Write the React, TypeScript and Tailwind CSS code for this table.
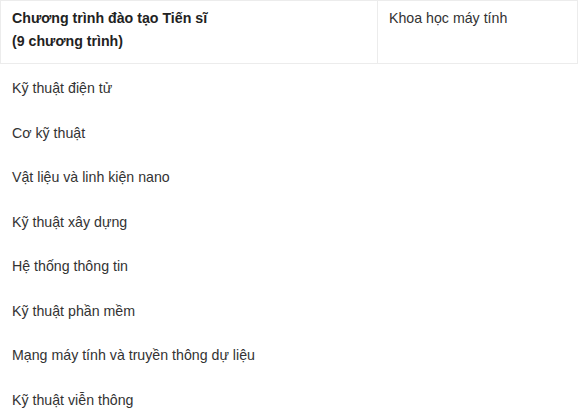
const rows = [
  'Kỹ thuật điện tử',
  'Cơ kỹ thuật',
  'Vật liệu và linh kiện nano',
  'Kỹ thuật xây dựng',
  'Hệ thống thông tin',
  'Kỹ thuật phần mềm',
  'Mạng máy tính và truyền thông dự liệu',
  'Kỹ thuật viễn thông',
]

export default function App() {
  return (
    <div
      className="w-[580px] h-[419px] overflow-hidden bg-white text-[14.2px] text-[#333]"
      style={{ fontFamily: '"Liberation Sans", Arial, sans-serif' }}
    >
      <div className="w-[578px] flex border border-[#ececec]">
        <div className="w-[377px] pl-[11px] pt-[6px] pb-[10px] leading-[23px] font-bold text-[#222] border-r border-[#ececec]">
          <div>Chương trình đào tạo Tiến sĩ</div>
          <div>(9 chương trình)</div>
        </div>
        <div className="flex-1 pl-[11px] pt-[6px] leading-[23px]">Khoa học máy tính</div>
      </div>
      <div className="pt-[2px]">
        {rows.map((r) => (
          <div key={r} className="pl-3 leading-[44.5px] whitespace-nowrap">
            {r}
          </div>
        ))}
      </div>
    </div>
  )
}
